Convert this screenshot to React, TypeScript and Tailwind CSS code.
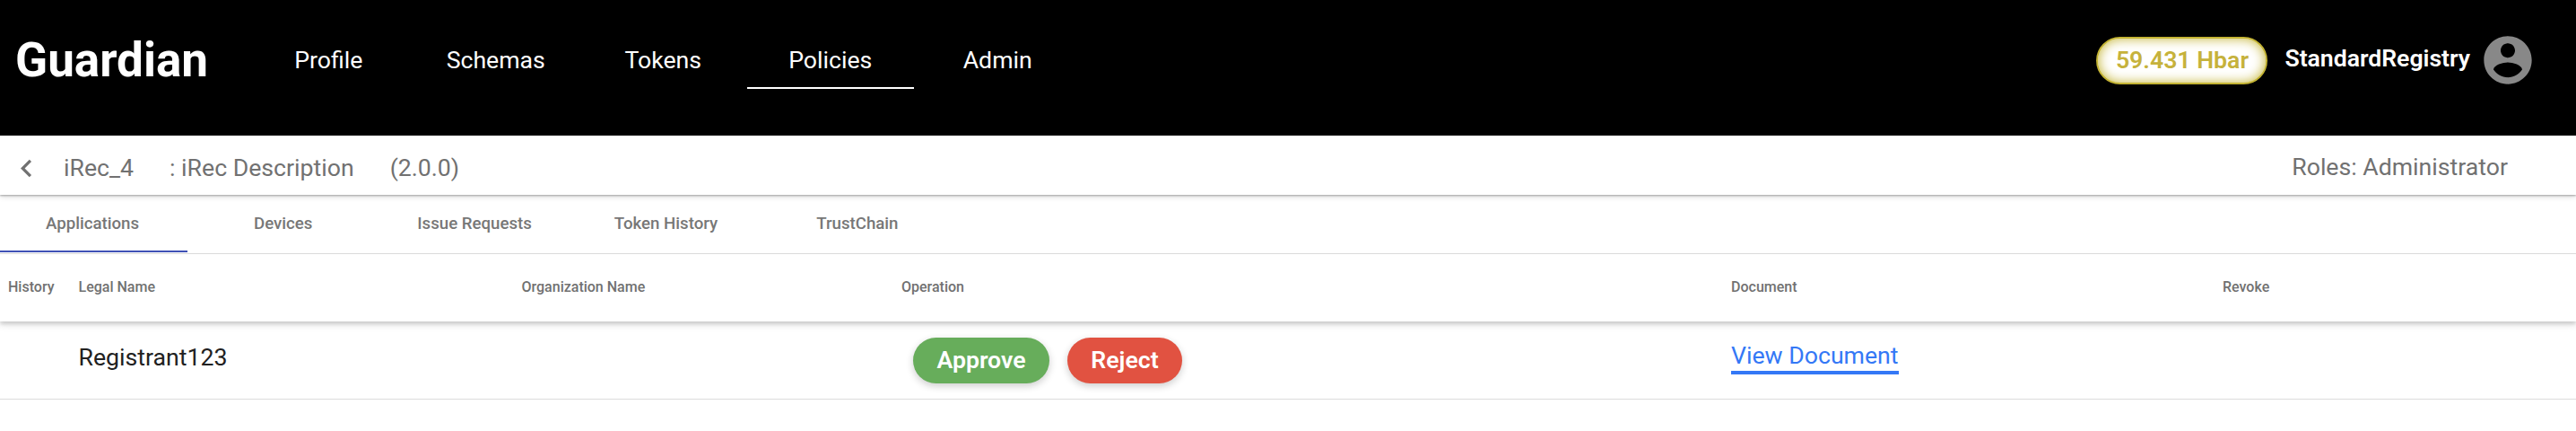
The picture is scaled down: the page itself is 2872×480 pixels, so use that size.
const NAV = ["Profile", "Schemas", "Tokens", "Policies", "Admin"];
const TABS = ["Devices", "Issue Requests", "Token History", "TrustChain"];

function TopBar() {
  return (
    <header className="flex h-[151px] items-start bg-black pl-[17px] pr-[44px] text-[26.67px] text-white">
      <div className="flex h-[134px] w-64 items-center text-[53px] font-bold leading-none">Guardian</div>
      <nav className="flex h-[134px] items-center">
        {NAV.map((item) => (
          <a
            key={item}
            className={
              item === "Policies"
                ? "flex h-16 w-[186.5px] items-center justify-center border-b-2 border-white pt-0.5"
                : "flex h-16 w-[186.5px] items-center justify-center"
            }
          >
            {item}
          </a>
        ))}
      </nav>
      <div className="ml-auto flex h-[134px] items-center">
        <div className="mt-px flex h-[53px] w-[191px] items-center justify-center rounded-full border-2 border-[#c4b434] bg-white pb-0.5 font-semibold text-[#c6b23c] shadow-[inset_0_0_13px_#c4b434]">
          59.431 Hbar
        </div>
        <span className="ml-[19px] pb-1 font-semibold tracking-[-0.04px]">StandardRegistry</span>
        <svg viewBox="0 0 24 24" className="ml-[10px] h-16 w-16 fill-[#888888]">
          <path d="M12 2C6.48 2 2 6.48 2 12s4.48 10 10 10 10-4.48 10-10S17.52 2 12 2zm0 3c1.66 0 3 1.34 3 3s-1.34 3-3 3-3-1.34-3-3 1.34-3 3-3zm0 14.2c-2.5 0-4.71-1.28-6-3.22.03-1.99 4-3.08 6-3.08 1.99 0 5.97 1.09 6 3.08-1.29 1.94-3.5 3.22-6 3.22z" />
        </svg>
      </div>
    </header>
  );
}

function PolicyBar() {
  return (
    <div className="z-10 flex h-[66px] items-center bg-white pl-[10px] pr-[76px] text-[26.67px] text-[#717171] shadow-[0_1px_2px_rgba(0,0,0,0.3),0_2px_6px_rgba(0,0,0,0.15)]">
      <svg viewBox="0 0 24 24" className="mt-[6px] h-[39px] w-[39px] fill-[#717171]">
        <path d="M15.41 7.41L14 6l-6 6 6 6 1.41-1.41L10.83 12z" />
      </svg>
      <div className="ml-[22px] flex gap-10 pt-[5px]">
        <span>iRec_4</span>
        <span>: iRec Description</span>
        <span>(2.0.0)</span>
      </div>
      <span className="ml-auto pt-[3px]">Roles: Administrator</span>
    </div>
  );
}

function Tabs() {
  return (
    <div className="flex h-[66px] border-b border-[#dcdcdc] text-[18.67px] font-medium text-[#777777]">
      <div className="flex h-16 w-[209px] items-center justify-center border-b-2 border-[#3f51b5] pr-[3px] pt-0.5">Applications</div>
      {TABS.map((tab) => (
        <div key={tab} className="flex h-16 w-[213.4px] items-center justify-center">
          {tab}
        </div>
      ))}
    </div>
  );
}

function ApplicationsTable() {
  return (
    <>
      <div className="z-10 grid h-[75px] grid-cols-[87.5px_494px_423.5px_925px_548px_1fr] items-center bg-white pb-0.5 text-base font-medium text-[#717171] shadow-[0_3px_4px_rgba(0,0,0,0.14),0_5px_8px_rgba(0,0,0,0.08)]">
        <span className="pl-[9px]">History</span>
        <span>Legal Name</span>
        <span>Organization Name</span>
        <span>Operation</span>
        <span>Document</span>
        <span>Revoke</span>
      </div>
      <div className="grid h-[87px] grid-cols-[87.5px_494px_423.5px_925px_548px_1fr] items-center border-b border-[#dcdcdc] text-[26.67px] text-[#212121]">
        <span />
        <span className="pb-[6px]">Registrant123</span>
        <span />
        <div className="flex gap-5 pl-[13px] text-white">
          <button className="h-[51px] w-[152px] rounded-full bg-[#67ad5b] font-semibold shadow-[0_3px_8px_rgba(0,0,0,0.2)]">Approve</button>
          <button className="h-[51px] w-[128px] rounded-full bg-[#e15241] font-semibold shadow-[0_3px_8px_rgba(0,0,0,0.2)]">Reject</button>
        </div>
        <div className="flex pb-[7px]">
          <a className="border-b-4 border-[#3478f6] leading-[34px] text-[#3478f6]">View Document</a>
        </div>
        <span />
      </div>
    </>
  );
}

export default function App() {
  return (
    <div className="flex min-h-[480px] flex-col bg-white font-['Roboto',sans-serif]">
      <TopBar />
      <PolicyBar />
      <Tabs />
      <ApplicationsTable />
    </div>
  );
}
